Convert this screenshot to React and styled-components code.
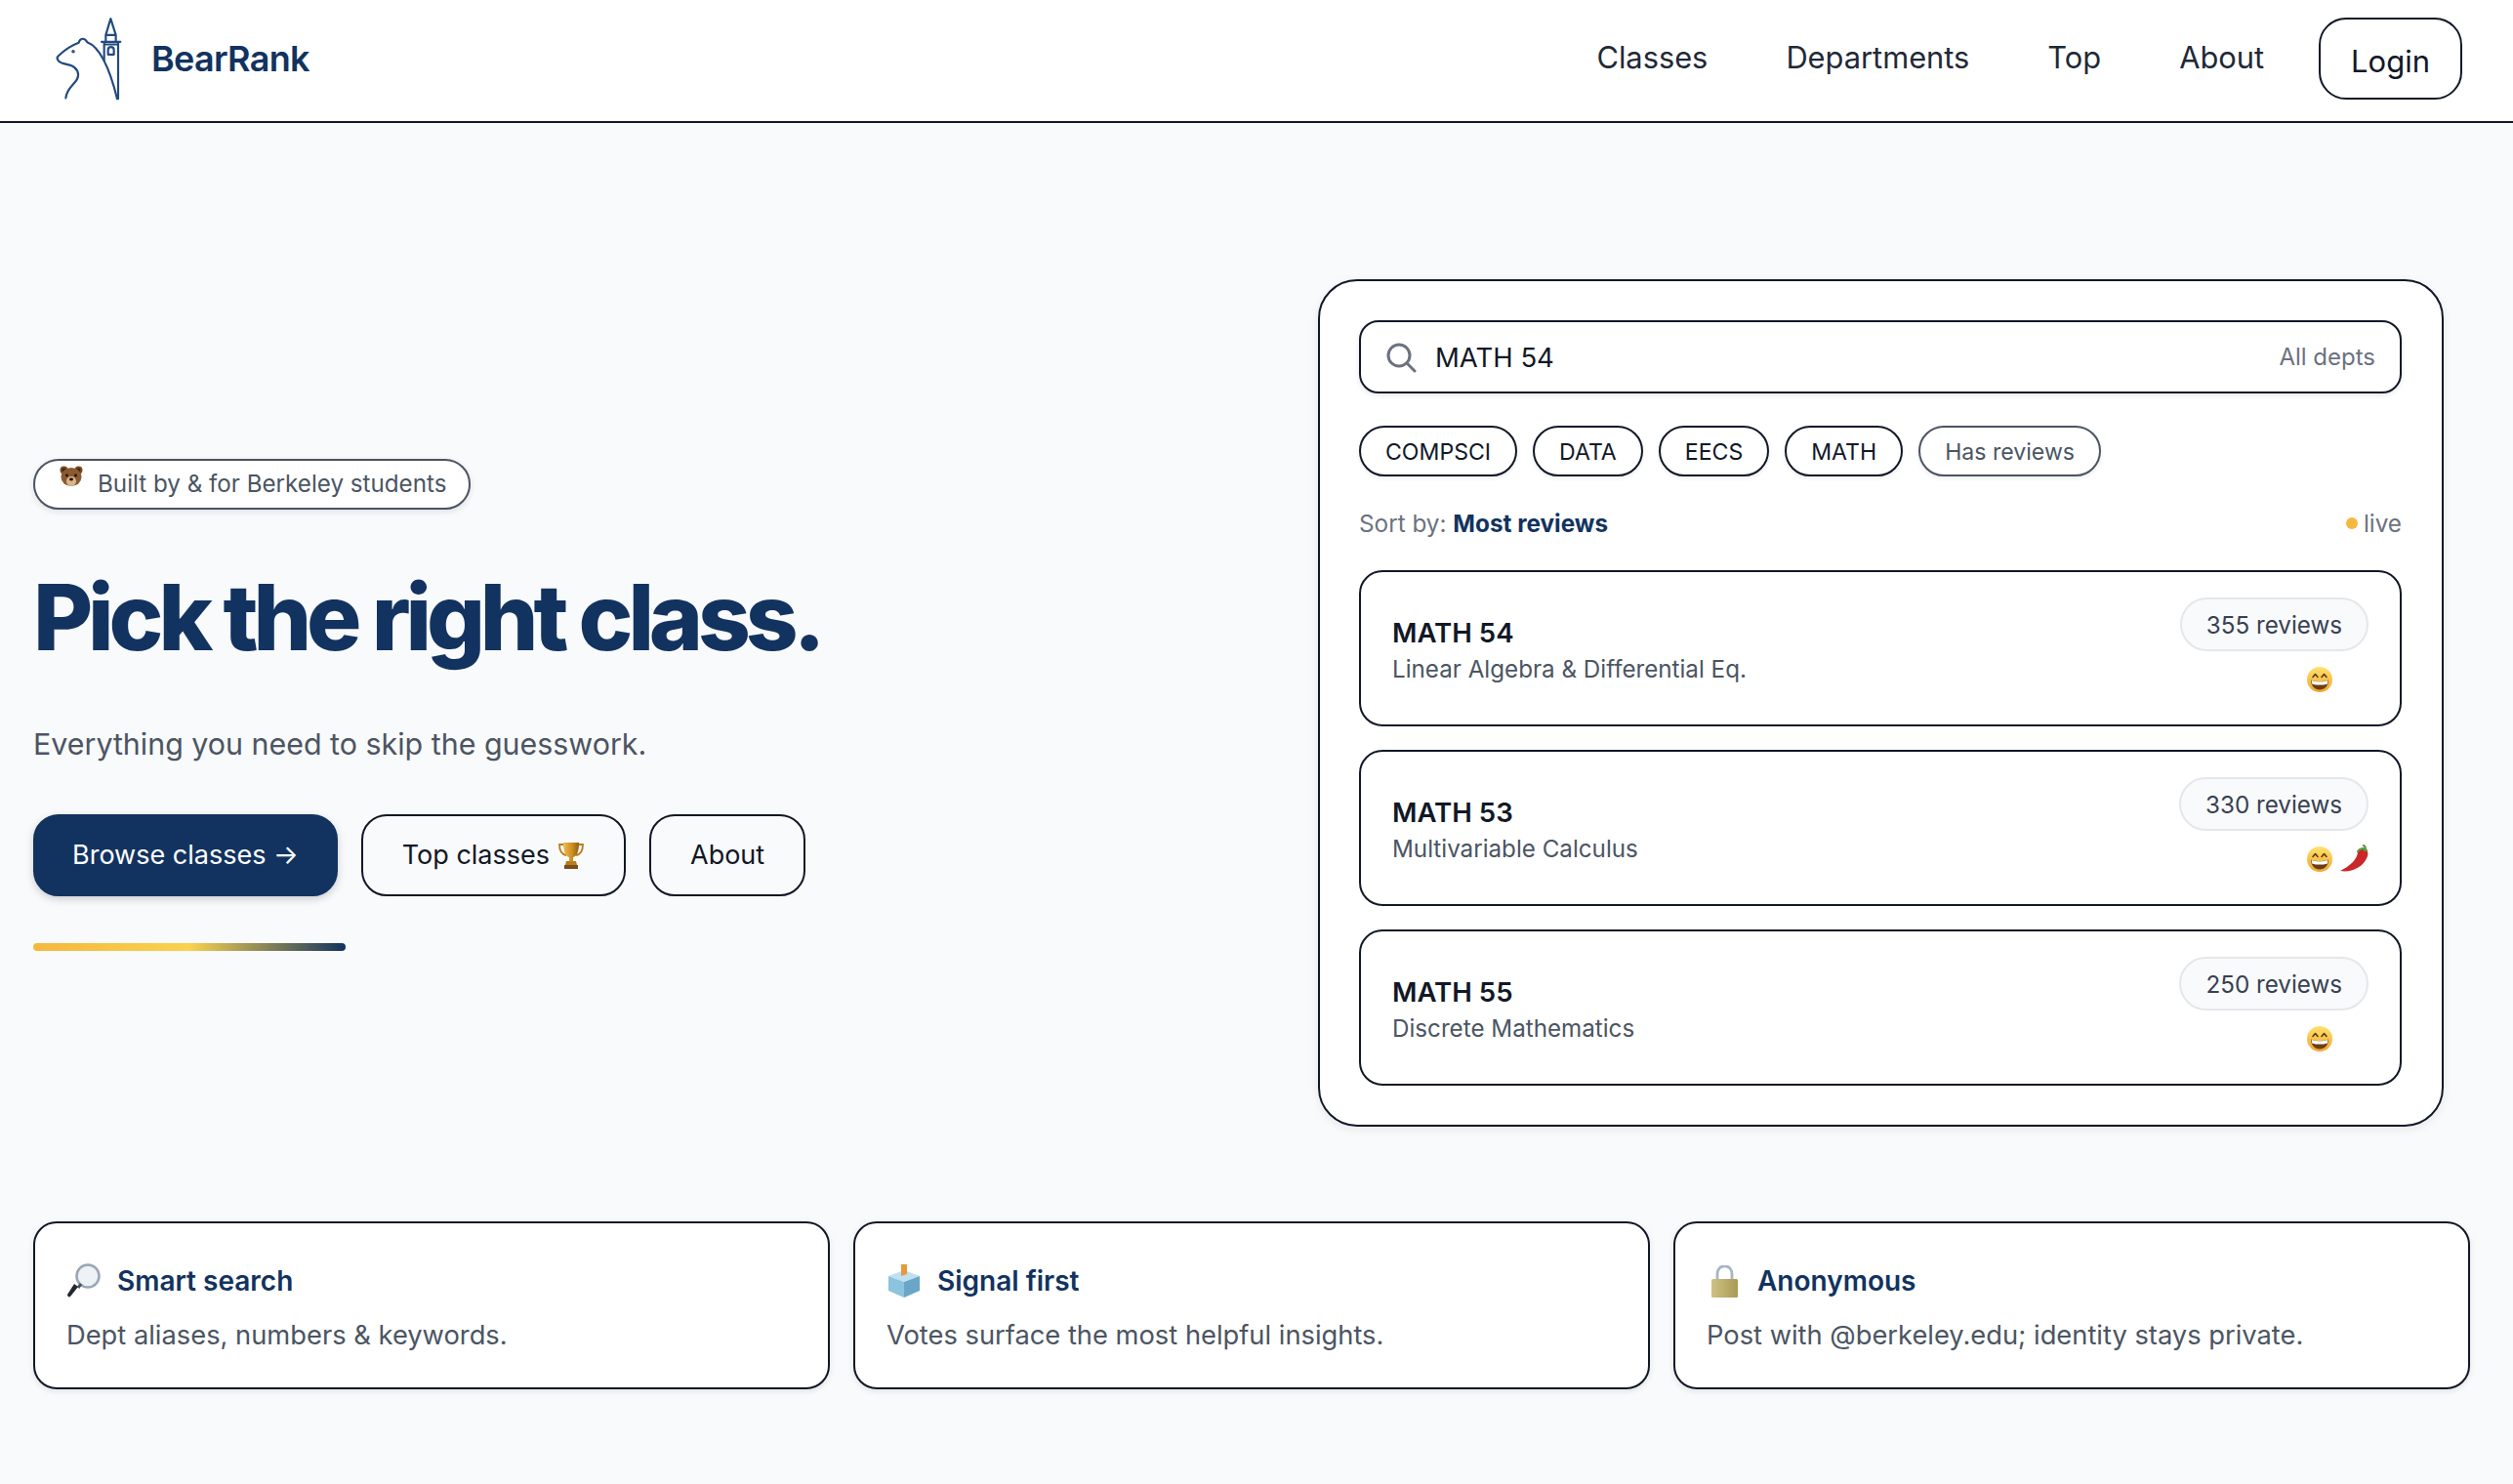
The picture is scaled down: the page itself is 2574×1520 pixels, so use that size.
import React from 'react';
import styled, { createGlobalStyle } from 'styled-components';

const GlobalStyle = createGlobalStyle`
  html, body { margin: 0; padding: 0; background: #f9fafb; }
  body {
    font-family: Inter, "Liberation Sans", sans-serif;
    color: #111827;
    min-height: 1520px;
    -webkit-font-smoothing: antialiased;
  }
  * { box-sizing: border-box; }
`;

const navy = '#12335f';
const ink = '#111827';
const slate = '#4b5563';

const Nav = styled.header`
  height: 126px;
  background: #fff;
  border-bottom: 2px solid ${ink};
  display: flex;
  align-items: center;
  justify-content: space-between;
  padding: 0 52px 4px 40px;
`;
const Brand = styled.a`
  display: flex;
  align-items: center;
  gap: 15px;
  font-size: 36px;
  font-weight: 600;
  letter-spacing: -0.7px;
  color: ${navy};
`;
const NavLinks = styled.nav`
  display: flex;
  align-items: center;
`;
const NavLink = styled.a`
  padding: 0 40px 3px;
  font-size: 30.8px;
  color: #1f2937;
`;
const LoginButton = styled.button`
  margin-left: 16px;
  width: 147px;
  height: 84px;
  border: 2px solid ${ink};
  border-radius: 28px;
  background: #fff;
  font: 400 31px Inter, sans-serif;
  color: ${ink};
  padding: 4px 0 0;
`;

const Main = styled.main`
  padding: 160px 44px 0 34px;
`;
const Hero = styled.section`
  display: grid;
  grid-template-columns: 1fr 1153px;
  column-gap: 40px;
  align-items: center;
  margin-right: 27px;
`;
const HeroCopy = styled.div`
  display: flex;
  flex-direction: column;
  align-items: flex-start;
  padding-top: 3px;
`;
const Badge = styled.div`
  height: 52px;
  display: flex;
  align-items: center;
  gap: 15px;
  padding: 0 23px 0 25px;
  background: #fff;
  border: 2px solid ${slate};
  border-radius: 26px;
  box-shadow: 0 2px 6px rgba(17, 24, 39, 0.12);
  font-size: 24.2px;
  color: ${slate};
  & > svg { margin-bottom: 16px; }
`;
const Title = styled.h1`
  margin: 52px 0 0;
  font-size: 94px;
  line-height: 116px;
  font-weight: 800;
  letter-spacing: -5.15px;
  color: ${navy};
`;
const Lead = styled.p`
  margin: 50px 0 0;
  font-size: 30.4px;
  line-height: 44px;
  color: ${slate};
`;
const Actions = styled.div`
  display: flex;
  gap: 24px;
  margin-top: 50px;
`;
const Button = styled.a`
  height: 84px;
  display: flex;
  align-items: center;
  gap: 8px;
  padding: 0 ${(p) => (p.$primary ? 38 : 40)}px;
  border-radius: 26px;
  font-size: 27px;
  border: 2px solid ${(p) => (p.$primary ? navy : ink)};
  background: ${(p) => (p.$primary ? navy : 'transparent')};
  color: ${(p) => (p.$primary ? '#fff' : ink)};
  box-shadow: ${(p) => (p.$primary ? '0 3px 8px rgba(17, 24, 39, 0.2)' : 'none')};
`;
const AccentBar = styled.div`
  width: 320px;
  height: 8px;
  margin-top: 48px;
  border-radius: 4px;
  background: linear-gradient(90deg, #f5b83f 0%, #f9d24f 50%, ${navy} 100%);
`;

const Panel = styled.aside`
  padding: 40px 41px 40px 40px;
  background: #fff;
  border: 2px solid ${ink};
  border-radius: 40px;
  box-shadow: 0 3px 10px rgba(17, 24, 39, 0.08);
`;
const SearchBox = styled.div`
  height: 75px;
  display: flex;
  align-items: center;
  gap: 19px;
  padding: 0 25px;
  border: 2px solid ${ink};
  border-radius: 20px;
  box-shadow: 0 2px 5px rgba(17, 24, 39, 0.1);
`;
const SearchText = styled.span`
  flex: 1;
  font-size: 27.500px;
  color: ${ink};
`;
const SearchHint = styled.span`
  font-size: 24px;
  color: #6b7280;
`;
const Chips = styled.div`
  display: flex;
  gap: 16px;
  margin-top: 33px;
`;
const Chip = styled.span`
  height: 52px;
  display: flex;
  align-items: center;
  padding: 2px 25px 0;
  border: 2px solid ${(p) => (p.$muted ? slate : ink)};
  border-radius: 26px;
  background: #fff;
  font-size: 23.1px;
  color: ${(p) => (p.$muted ? slate : ink)};
  box-shadow: 0 2px 4px rgba(17, 24, 39, 0.08);
`;
const SortRow = styled.div`
  display: flex;
  align-items: center;
  justify-content: space-between;
  height: 30px;
  margin-top: 33px;
  font-size: 24.3px;
  color: #6b7280;
  & b { color: ${navy}; font-weight: 700; }
`;
const Live = styled.span`
  display: flex;
  align-items: center;
  gap: 6px;
  &::before {
    content: '';
    width: 12px;
    height: 12px;
    border-radius: 50%;
    background: #f5b83f;
  }
`;
const Results = styled.div`
  display: flex;
  flex-direction: column;
  gap: 24px;
  margin-top: 33px;
`;
const ResultCard = styled.article`
  height: 160px;
  display: flex;
  justify-content: space-between;
  padding: 26px 32px 0;
  border: 2px solid ${ink};
  border-radius: 24px;
`;
const ResultText = styled.div`
  padding-top: 17px;
`;
const ResultName = styled.div`
  font-size: 27.6px;
  line-height: 38px;
  font-weight: 600;
  color: ${ink};
`;
const ResultDesc = styled.div`
  margin-top: 2px;
  font-size: 24.2px;
  line-height: 34px;
  color: ${slate};
`;
const ResultMeta = styled.div`
  display: flex;
  flex-direction: column;
  align-items: flex-end;
  gap: 14px;
`;
const ReviewPill = styled.span`
  height: 55px;
  display: flex;
  align-items: center;
  padding: 2px 25px 0;
  border: 2px solid #e5e7eb;
  border-radius: 28px;
  background: #f9fafb;
  font-size: 24.2px;
  color: #374151;
`;
const Reactions = styled.div`
  display: flex;
  align-items: center;
  gap: 8px;
`;
const ReactionSlot = styled.span`
  display: flex;
  visibility: ${(p) => (p.$hidden ? 'hidden' : 'visible')};
`;

const Features = styled.section`
  display: grid;
  grid-template-columns: repeat(3, 1fr);
  gap: 24px;
  margin-top: 97px;
`;
const FeatureCard = styled.article`
  height: 172px;
  padding: 37px 32px 0;
  background: #fff;
  border: 2px solid ${ink};
  border-radius: 24px;
  box-shadow: 0 2px 6px rgba(17, 24, 39, 0.1);
`;
const FeatureTitle = styled.h3`
  margin: 0;
  display: flex;
  align-items: center;
  gap: 16px;
  height: 44px;
  font-size: 28px;
  font-weight: 600;
  color: ${navy};
`;
const FeatureIcon = styled.span`
  width: 36px;
  display: flex;
  justify-content: center;
`;
const FeatureDesc = styled.p`
  margin: 14px 0 0;
  font-size: 27.3px;
  line-height: 40px;
  color: ${slate};
`;

const Logo = () => (
  <svg width="100" height="100" viewBox="0 -1.500 300 300" fill="none" stroke="#234a80" strokeWidth="6.500" strokeLinecap="round" strokeLinejoin="round">
    <path d="M82 270C85 240 105 232 117 212C125 195 118 178 100 170C85 165 68 165 60 156C55 150 55 145 58 142C75 125 100 108 122 100C125 85 140 83 148 98C185 112 215 170 240 272" />
    <path d="M220 26L205 76H236ZM205 76V97M236 76V97M192 97H250M200 97V155M243 97V272M200 105H243" />
    <path d="M212 136V122C212 110 230 110 230 122V136Z" />
    <circle cx="105" cy="127" r="2" fill="#234a80" />
  </svg>
);

const SearchIcon = () => (
  <svg width="32" height="32" viewBox="0 0 32 32" fill="none" stroke="#6b7280" strokeWidth="3" strokeLinecap="round">
    <circle cx="14" cy="14" r="11" />
    <path d="M22 22l8 8" />
  </svg>
);

const BearEmoji = () => (
  <svg width="24" height="22" viewBox="0 0 24 22">
    <circle cx="4.5" cy="4.5" r="4" fill="#7a4a26" />
    <circle cx="19.5" cy="4.5" r="4" fill="#7a4a26" />
    <circle cx="4.5" cy="4.5" r="2" fill="#3f2413" />
    <circle cx="19.5" cy="4.5" r="2" fill="#3f2413" />
    <ellipse cx="12" cy="11.5" rx="10.5" ry="9.5" fill="#8b5a30" />
    <ellipse cx="12" cy="16" rx="5" ry="5" fill="#d8b58a" />
    <circle cx="7.5" cy="10" r="1.4" fill="#1d1009" />
    <circle cx="16.5" cy="10" r="1.4" fill="#1d1009" />
    <ellipse cx="12" cy="14" rx="2" ry="1.4" fill="#1d1009" />
  </svg>
);

const TrophyEmoji = () => (
  <svg width="28" height="28" viewBox="0 0 28 28" fill="none">
    <defs>
      <linearGradient id="trophyGold" x1="0" x2="1">
        <stop offset="0" stopColor="#f3bd4b" />
        <stop offset="0.6" stopColor="#c98a1f" />
        <stop offset="1" stopColor="#8f5c12" />
      </linearGradient>
    </defs>
    <path d="M6 3H2c0 6 2 10 7 11M22 3h4c0 6-2 10-7 11" stroke="#b97c1c" strokeWidth="1.8" />
    <path d="M6 1h16c0 9-2 14-6 15v4h-4v-4C8 15 6 10 6 1z" fill="url(#trophyGold)" />
    <path d="M9 20h10l1 4H8z" fill="#b97c1c" />
    <rect x="7" y="24" width="14" height="4" fill="#7a4c1c" />
  </svg>
);

const GrinEmoji = () => (
  <svg width="26" height="26" viewBox="0 0 26 26">
    <defs>
      <linearGradient id="grinFace" x1="0" y1="0" x2="0" y2="1">
        <stop offset="0" stopColor="#fde36f" />
        <stop offset="1" stopColor="#f3a42c" />
      </linearGradient>
    </defs>
    <circle cx="13" cy="13" r="13" fill="url(#grinFace)" />
    <path d="M6 10.5l2.500-3 2.500 3M15 10.5l2.500-3 2.500 3" fill="none" stroke="#5b3a12" strokeWidth="1.6" strokeLinecap="round" strokeLinejoin="round" />
    <path d="M4 13.5c5 2 13 2 18 0 0 6-4 10-9 10s-9-4-9-10z" fill="#6b3f13" />
    <path d="M4.6 14c5 1.800 12 1.800 16.800 0l-.5 3.400c-5 1.600-11 1.600-15.800 0z" fill="#fff" />
  </svg>
);

const ChiliEmoji = () => (
  <svg width="29" height="29" viewBox="0 0 29 29" fill="none">
    <path d="M0 27c10 2 24-3 28-15 1-3 0-6-2-7-3-2-6-1-8 2 0 8-8 15-18 20z" fill="#c9272a" />
    <path d="M25 6c1-2 1-4-1-5" stroke="#5c9a3c" strokeWidth="2.2" strokeLinecap="round" />
    <path d="M18 7c2-3 6-4 9-1" stroke="#5c9a3c" strokeWidth="2.2" strokeLinecap="round" />
  </svg>
);

const MagnifierEmoji = () => (
  <svg width="36" height="36" viewBox="0 0 36 36">
    <circle cx="22" cy="13" r="11.500" fill="#eef2f6" stroke="#9aa6b4" strokeWidth="2.500" />
    <path d="M15 21l-3 4" stroke="#4b5563" strokeWidth="3" />
    <path d="M12 24l-8 10c-1 1-3 0-3-2l7-11z" fill="#23272e" />
  </svg>
);

const BallotEmoji = () => (
  <svg width="34" height="34" viewBox="0 0 34 34">
    <path d="M14 0h6v12h-6z" fill="#e69a3c" />
    <path d="M17 6l16 6-16 6-16-6z" fill="#bfe0f0" />
    <path d="M1 12l16 6v16L1 27z" fill="#8cc3de" />
    <path d="M33 12l-16 6v16l16-7z" fill="#6aa6c8" />
    <path d="M14 0h6v10l-6 2z" fill="#e69a3c" />
  </svg>
);

const LockEmoji = () => (
  <svg width="27" height="33" viewBox="0 0 27 33" fill="none">
    <defs>
      <linearGradient id="lockBody" x1="0" x2="1">
        <stop offset="0" stopColor="#cfc184" />
        <stop offset="1" stopColor="#a99a56" />
      </linearGradient>
    </defs>
    <path d="M6 15V9c0-11 15-11 15 0v6" stroke="#a8b5c6" strokeWidth="2.800" />
    <rect x="0" y="14" width="27" height="19" rx="1.500" fill="url(#lockBody)" />
  </svg>
);

const navItems = ['Classes', 'Departments', 'Top', 'About'];
const chips = ['COMPSCI', 'DATA', 'EECS', 'MATH'];
const results = [
  { name: 'MATH 54', desc: 'Linear Algebra & Differential Eq.', reviews: 355, spicy: false },
  { name: 'MATH 53', desc: 'Multivariable Calculus', reviews: 330, spicy: true },
  { name: 'MATH 55', desc: 'Discrete Mathematics', reviews: 250, spicy: false },
];
const features = [
  { icon: <MagnifierEmoji />, title: 'Smart search', desc: 'Dept aliases, numbers & keywords.' },
  { icon: <BallotEmoji />, title: 'Signal first', desc: 'Votes surface the most helpful insights.' },
  { icon: <LockEmoji />, title: 'Anonymous', desc: 'Post with @berkeley.edu; identity stays private.' },
];

const App = () => (
  <>
    <GlobalStyle />
    <Nav>
      <Brand>
        <Logo />
        BearRank
      </Brand>
      <NavLinks>
        {navItems.map((item) => (
          <NavLink key={item}>{item}</NavLink>
        ))}
        <LoginButton>Login</LoginButton>
      </NavLinks>
    </Nav>
    <Main>
      <Hero>
        <HeroCopy>
          <Badge>
            <BearEmoji />
            Built by &amp; for Berkeley students
          </Badge>
          <Title>Pick the right class.</Title>
          <Lead>Everything you need to skip the guesswork.</Lead>
          <Actions>
            <Button $primary>Browse classes →</Button>
            <Button>
              Top classes <TrophyEmoji />
            </Button>
            <Button>About</Button>
          </Actions>
          <AccentBar />
        </HeroCopy>
        <Panel>
          <SearchBox>
            <SearchIcon />
            <SearchText>MATH 54</SearchText>
            <SearchHint>All depts</SearchHint>
          </SearchBox>
          <Chips>
            {chips.map((chip) => (
              <Chip key={chip}>{chip}</Chip>
            ))}
            <Chip $muted>Has reviews</Chip>
          </Chips>
          <SortRow>
            <span>
              Sort by: <b>Most reviews</b>
            </span>
            <Live>live</Live>
          </SortRow>
          <Results>
            {results.map((r) => (
              <ResultCard key={r.name}>
                <ResultText>
                  <ResultName>{r.name}</ResultName>
                  <ResultDesc>{r.desc}</ResultDesc>
                </ResultText>
                <ResultMeta>
                  <ReviewPill>{r.reviews} reviews</ReviewPill>
                  <Reactions>
                    <GrinEmoji />
                    <ReactionSlot $hidden={!r.spicy}>
                      <ChiliEmoji />
                    </ReactionSlot>
                  </Reactions>
                </ResultMeta>
              </ResultCard>
            ))}
          </Results>
        </Panel>
      </Hero>
      <Features>
        {features.map((f) => (
          <FeatureCard key={f.title}>
            <FeatureTitle>
              <FeatureIcon>{f.icon}</FeatureIcon>
              {f.title}
            </FeatureTitle>
            <FeatureDesc>{f.desc}</FeatureDesc>
          </FeatureCard>
        ))}
      </Features>
    </Main>
  </>
);

export default App;
